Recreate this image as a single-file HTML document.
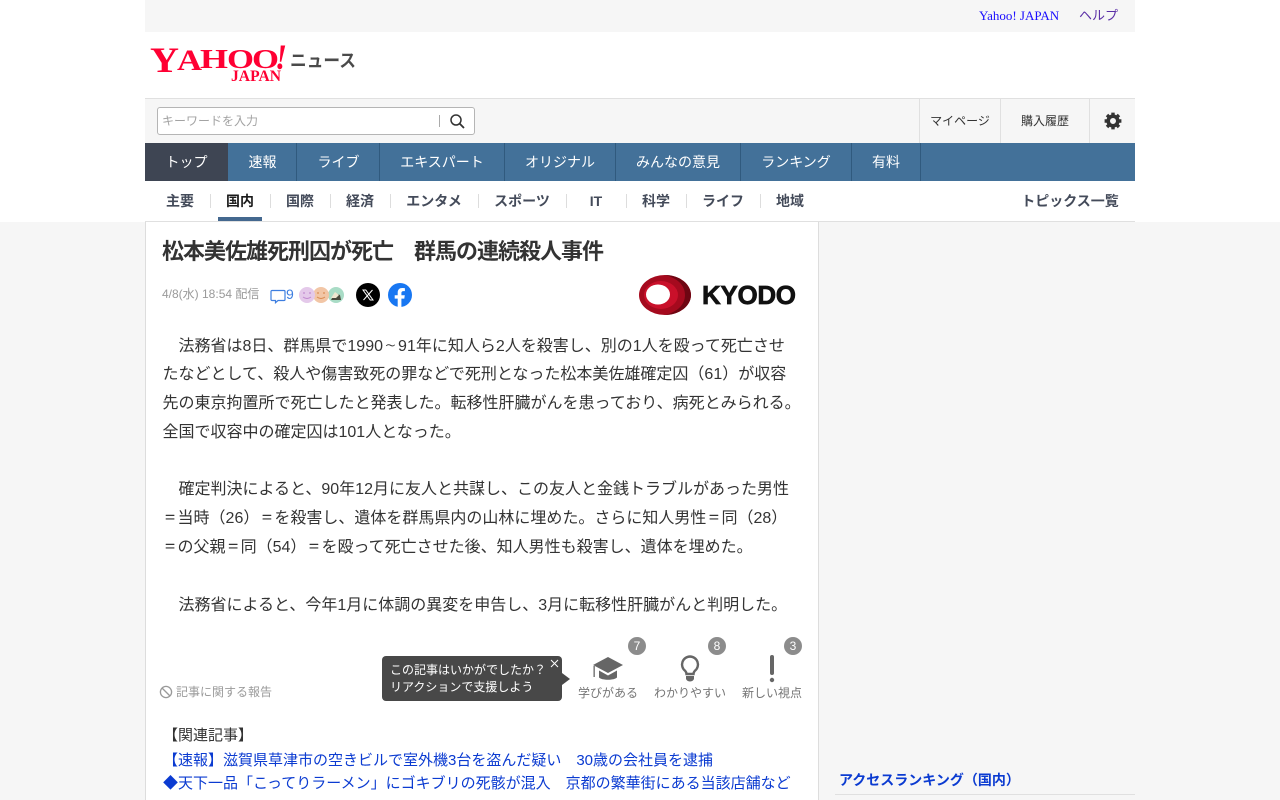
<!DOCTYPE html>
<html lang="ja">
<head>
<meta charset="utf-8">
<title>松本美佐雄死刑囚が死亡　群馬の連続殺人事件</title>
<style>
*{box-sizing:border-box}
html,body{margin:0;padding:0;width:1280px;height:800px;overflow:hidden;background:#fff}
body{position:relative;font-family:"Liberation Sans","Noto Sans CJK JP",sans-serif;color:#333}
.a{position:absolute;white-space:nowrap}
.c{text-align:center}
.nav{top:143px;height:38px;line-height:38px;font-size:14px;color:#fff;text-align:center;opacity:1}
.sep{position:absolute;top:143px;height:38px;width:1px;background:#305a7e}
.sub{top:192px;height:18px;line-height:18px;font-size:14px;font-weight:bold;color:#444b5a;text-align:center}
.subsep{position:absolute;top:194px;height:14px;width:1px;background:#ddd}
.body{left:162.5px;font-size:16px;line-height:28.8px;color:#333}
.body b{font-family:"NanumGothic","Noto Sans CJK JP",sans-serif;font-weight:normal;line-height:0}
.lnk{color:#0b3bd1}
.react{font-size:12px;color:#757575;text-align:center;top:685px;height:16px;line-height:16px}
.badge{position:absolute;width:18px;height:18px;border-radius:9px;background:#8c8c8c;color:#fff;font-size:12px;line-height:18px;text-align:center;top:637px}
</style>
</head>
<body>
<div class="a" style="left:0;top:222px;width:1280px;height:578px;background:#f6f6f6"></div>

<div class="a" style="left:145px;top:0;width:990px;height:32px;background:#f6f6f6"></div>
<div class="a" style="left:979px;top:7px;font:13px/18px 'Liberation Serif','Noto Sans CJK JP',serif;color:#1a0dff">Yahoo! JAPAN</div>
<div class="a" style="left:1079px;top:7px;font:13px/18px 'Liberation Serif','Noto Sans CJK JP',serif;color:#5a2ea6">ヘルプ</div>

<svg class="a" style="left:145px;top:40px" width="220" height="50" viewBox="0 0 220 50" font-family="Liberation Serif" font-weight="bold" fill="#ff0033">
  <text x="5" y="32" font-size="36" textLength="29" lengthAdjust="spacingAndGlyphs">Y</text>
  <text x="32" y="30" font-size="30" textLength="25" lengthAdjust="spacingAndGlyphs">A</text>
  <text x="55" y="28" font-size="27" textLength="28" lengthAdjust="spacingAndGlyphs">H</text>
  <text x="82" y="28" font-size="27" textLength="27" lengthAdjust="spacingAndGlyphs">O</text>
  <text x="107" y="28" font-size="27" textLength="27" lengthAdjust="spacingAndGlyphs">O</text>
  <text x="130" y="29" font-size="36" font-style="italic" textLength="12" lengthAdjust="spacingAndGlyphs">!</text>
  <text x="86" y="41" font-size="16" textLength="50" lengthAdjust="spacingAndGlyphs">JAPAN</text>
  <text x="145" y="27" font-family="Liberation Sans,Noto Sans CJK JP" font-size="18" fill="#4a4a4a" textLength="66" lengthAdjust="spacingAndGlyphs">ニュース</text>
</svg>

<div class="a" style="left:145px;top:98px;width:990px;height:45px;background:#f6f6f6;border-top:1px solid #e0e0e0"></div>
<div class="a" style="left:157px;top:107px;width:318px;height:28px;background:#fff;border:1px solid #b5b5b5;border-radius:3px"></div>
<div class="a" style="left:162px;top:112px;font-size:12px;line-height:18px;color:#a3a3a3">キーワードを入力</div>
<div class="a" style="left:439px;top:115px;width:1px;height:12px;background:#aaa"></div>
<svg class="a" style="left:449px;top:113px" width="17" height="17" viewBox="0 0 17 17"><circle cx="7" cy="7" r="5" fill="none" stroke="#333" stroke-width="1.5"/><path d="M10.8 10.8L15 15" stroke="#333" stroke-width="1.8" fill="none"/></svg>
<div class="a" style="left:919px;top:99px;width:1px;height:44px;background:#e0e0e0"></div>
<div class="a" style="left:1000px;top:99px;width:1px;height:44px;background:#e0e0e0"></div>
<div class="a" style="left:1089px;top:99px;width:1px;height:44px;background:#e0e0e0"></div>
<div class="a c" style="left:920px;top:112px;width:80px;font-size:12px;line-height:18px;color:#333">マイページ</div>
<div class="a c" style="left:1001px;top:112px;width:88px;font-size:12px;line-height:18px;color:#333">購入履歴</div>
<svg class="a" style="left:1104px;top:112px" width="18" height="18" viewBox="0 0 18 18"><circle cx="9" cy="9" r="4.8" fill="none" stroke="#333" stroke-width="3.6"/><g stroke="#333" stroke-width="3.4"><path d="M9 .6V3.4M9 14.6v2.8M.6 9H3.4M14.6 9h2.8M3 3l2 2M13 13l2 2M15 3l-2 2M5 13l-2 2"/></g></svg>

<div class="a" style="left:145px;top:143px;width:990px;height:38px;background:#437199"></div>
<div class="a" style="left:145px;top:143px;width:83px;height:38px;background:#3e4553"></div>
<div class="a nav" style="left:145px;width:83px">トップ</div>
<div class="a nav" style="left:228px;width:69px">速報</div>
<div class="a nav" style="left:297px;width:83px">ライブ</div>
<div class="a nav" style="left:380px;width:124px">エキスパート</div>
<div class="a nav" style="left:505px;width:110px">オリジナル</div>
<div class="a nav" style="left:616px;width:124px">みんなの意見</div>
<div class="a nav" style="left:741px;width:110px">ランキング</div>
<div class="a nav" style="left:852px;width:68px">有料</div>
<i class="sep" style="left:296px"></i><i class="sep" style="left:379px"></i><i class="sep" style="left:504px"></i><i class="sep" style="left:615px"></i><i class="sep" style="left:740px"></i><i class="sep" style="left:851px"></i><i class="sep" style="left:920px"></i>

<div class="a sub" style="left:150px;width:60px">主要</div>
<div class="a sub" style="left:210px;width:60px;color:#1a1a1a">国内</div>
<div class="a sub" style="left:270px;width:60px">国際</div>
<div class="a sub" style="left:330px;width:60px">経済</div>
<div class="a sub" style="left:390px;width:88px">エンタメ</div>
<div class="a sub" style="left:478px;width:88px">スポーツ</div>
<div class="a sub" style="left:566px;width:60px">IT</div>
<div class="a sub" style="left:626px;width:60px">科学</div>
<div class="a sub" style="left:686px;width:74px">ライフ</div>
<div class="a sub" style="left:760px;width:60px">地域</div>
<div class="a sub" style="left:1021px;width:98px">トピックス一覧</div>
<i class="subsep" style="left:210px"></i><i class="subsep" style="left:270px"></i><i class="subsep" style="left:330px"></i><i class="subsep" style="left:390px"></i><i class="subsep" style="left:478px"></i><i class="subsep" style="left:566px"></i><i class="subsep" style="left:626px"></i><i class="subsep" style="left:686px"></i><i class="subsep" style="left:760px"></i>
<div class="a" style="left:218px;top:217px;width:44px;height:4px;background:#44688f"></div>
<div class="a" style="left:145px;top:221px;width:990px;height:1px;background:#e0e0e0"></div>

<div class="a" style="left:145px;top:222px;width:674px;height:578px;background:#fff;border-left:1px solid #ddd;border-right:1px solid #ddd"></div>

<div class="a" style="left:162px;top:237px;font-size:22px;line-height:30px;font-weight:bold;color:#333;letter-spacing:-1px">松本美佐雄死刑囚が死亡　群馬の連続殺人事件</div>

<div class="a" style="left:162px;top:286px;font-size:12px;line-height:16px;color:#9a9a9a">4/8(水) 18:54 配信</div>
<svg class="a" style="left:270px;top:289px" width="16" height="15" viewBox="0 0 16 15"><path d="M2 1.5h12a1 1 0 0 1 1 1v8a1 1 0 0 1-1 1H8l-2.5 2.2V11.5H2a1 1 0 0 1-1-1v-8a1 1 0 0 1 1-1z" fill="none" stroke="#3d7ee0" stroke-width="1.2"/></svg>
<div class="a" style="left:286px;top:286px;font-size:14px;line-height:16px;color:#3d7ee0">9</div>
<svg class="a" style="left:298px;top:286px" width="48" height="18" viewBox="0 0 48 18">
  <circle cx="38" cy="9" r="8" fill="#a9dcc6"/><path d="M33 14l4-7 5 2 1 5z" fill="#4a4a3e"/><path d="M33 12l4-6 4 3-3 3z" fill="#efe6d0"/>
  <circle cx="23" cy="9" r="8" fill="#f2c6a6"/><path d="M19 11q4 3 8 0" stroke="#d98a50" fill="none"/>
  <circle cx="9" cy="9" r="8" fill="#e4c9ea"/><path d="M5 11q4 3 8 0" stroke="#c088cf" fill="none"/>
  <circle cx="6" cy="7" r=".9" fill="#c088cf"/><circle cx="12" cy="7" r=".9" fill="#c088cf"/><circle cx="20" cy="7" r=".9" fill="#d98a50"/><circle cx="26" cy="7" r=".9" fill="#d98a50"/>
</svg>
<svg class="a" style="left:356px;top:283px" width="24" height="24" viewBox="0 0 24 24"><circle cx="12" cy="12" r="12" fill="#000"/><path d="M7 7h2.8l7.2 10h-2.8zM16.5 7L7.5 17" fill="none" stroke="#fff" stroke-width="1"/></svg>
<svg class="a" style="left:388px;top:283px" width="24" height="24" viewBox="0 0 24 24"><circle cx="12" cy="12" r="12" fill="#1877f2"/><path d="M13.4 24v-8.4h2.9l.5-3.4h-3.4V10c0-1 .5-1.9 2-1.9h1.5V5.2s-1.4-.2-2.7-.2c-2.7 0-4.5 1.6-4.5 4.6v2.6H6.7v3.4h3v8.4z" fill="#fff"/></svg>

<svg class="a" style="left:636px;top:272px" width="164" height="46" viewBox="0 0 164 46">
  <ellipse cx="29" cy="23" rx="26" ry="20" fill="#a50a1e"/>
  <path d="M29 3c14 0 26 9 26 20S43 43 29 43c12-3 20-10 20-20S41 6 29 3z" fill="#6e0612"/>
  <ellipse cx="25" cy="23" rx="17" ry="14" fill="#c9102a"/>
  <ellipse cx="22" cy="22.500" rx="12" ry="10" fill="#fff"/>
  <text x="66" y="32" font-family="Liberation Sans" font-weight="bold" font-size="26" fill="#111" stroke="#111" stroke-width=".7" textLength="94" lengthAdjust="spacing">KYODO</text>
</svg>

<div class="a body" style="top:332.500px">　法務省は8日、群馬県で1990<b>～</b>91年に知人ら2人を殺害し、別の1人を殴って死亡させ<br>たなどとして、殺人や傷害致死の罪などで死刑となった松本美佐雄確定囚（61）が収容<br>先の東京拘置所で死亡したと発表した。転移性肝臓がんを患っており、病死とみられる。<br>全国で収容中の確定囚は101人となった。<br><br>　確定判決によると、90年12月に友人と共謀し、この友人と金銭トラブルがあった男性<br><b>＝</b>当時（26）<b>＝</b>を殺害し、遺体を群馬県内の山林に埋めた。さらに知人男性<b>＝</b>同（28）<br><b>＝</b>の父親<b>＝</b>同（54）<b>＝</b>を殴って死亡させた後、知人男性も殺害し、遺体を埋めた。<br><br>　法務省によると、今年1月に体調の異変を申告し、3月に転移性肝臓がんと判明した。</div>

<svg class="a" style="left:159px;top:685px" width="14" height="14" viewBox="0 0 14 14"><circle cx="7" cy="7" r="5.6" fill="none" stroke="#999" stroke-width="1.3"/><path d="M3 3l8 8" stroke="#999" stroke-width="1.3"/></svg>
<div class="a" style="left:176px;top:684px;font-size:12px;line-height:16px;color:#9a9a9a">記事に関する報告</div>

<div class="a" style="left:382px;top:656px;width:180px;height:45px;background:#484848;border-radius:4px"></div>
<div class="a" style="left:562px;top:673px;width:0;height:0;border-left:8px solid #484848;border-top:6px solid transparent;border-bottom:6px solid transparent"></div>
<div class="a" style="left:390px;top:662px;font-size:12px;line-height:17px;color:#fff">この記事はいかがでしたか？<br>リアクションで支援しよう</div>
<svg class="a" style="left:550px;top:659px" width="9" height="9" viewBox="0 0 9 9"><path d="M1 1l7 7M8 1L1 8" stroke="#fff" stroke-width="1"/></svg>

<svg class="a" style="left:592px;top:656px" width="32" height="26" viewBox="0 0 32 26"><path d="M16 1L31 9 16 17 1 9z" fill="#666"/><path d="M7 14.500v7c3 3 15 3 18 0v-7l-9 5z" fill="#666"/><rect x="1.500" y="10" width="1.300" height="11" fill="#666"/></svg>
<svg class="a" style="left:678px;top:654px" width="24" height="30" viewBox="0 0 24 30"><path d="M12 2.500a8 8 0 0 0-5 14.200c1 1 1.500 2 1.500 3.300h7c0-1.300.5-2.300 1.500-3.300A8 8 0 0 0 12 2.500z" fill="none" stroke="#666" stroke-width="2.400"/><path d="M8 22h8v2.500c0 1.500-2 3-4 3s-4-1.500-4-3z" fill="#666"/></svg>
<svg class="a" style="left:767px;top:654px" width="10" height="30" viewBox="0 0 10 30"><rect x="3" y="1" width="4" height="20" rx="2" fill="#666"/><circle cx="5" cy="26" r="2.200" fill="#666"/></svg>
<div class="a react" style="left:568px;width:80px">学びがある</div>
<div class="a react" style="left:650px;width:80px">わかりやすい</div>
<div class="a react" style="left:732px;width:80px">新しい視点</div>
<div class="badge" style="left:628px">7</div>
<div class="badge" style="left:708px">8</div>
<div class="badge" style="left:784px">3</div>

<div class="a" style="left:163px;top:722px;font-size:15px;line-height:28.800px;color:#333">【関連記事】</div>
<div class="a lnk" style="left:163px;top:747px;font-size:15px;line-height:28.800px">【速報】滋賀県草津市の空きビルで室外機3台を盗んだ疑い　30歳の会社員を逮捕</div>
<div class="a lnk" style="left:163px;top:770px;font-size:15px;line-height:28.800px">◆天下一品「こってりラーメン」にゴキブリの死骸が混入　京都の繁華街にある当該店舗など</div>

<div class="a" style="left:839px;top:771px;font-size:14px;line-height:18px;font-weight:bold;color:#0b3bd1">アクセスランキング（国内）</div>
<div class="a" style="left:835px;top:794px;width:300px;height:1px;background:#e0e0e0"></div>
</body>
</html>
